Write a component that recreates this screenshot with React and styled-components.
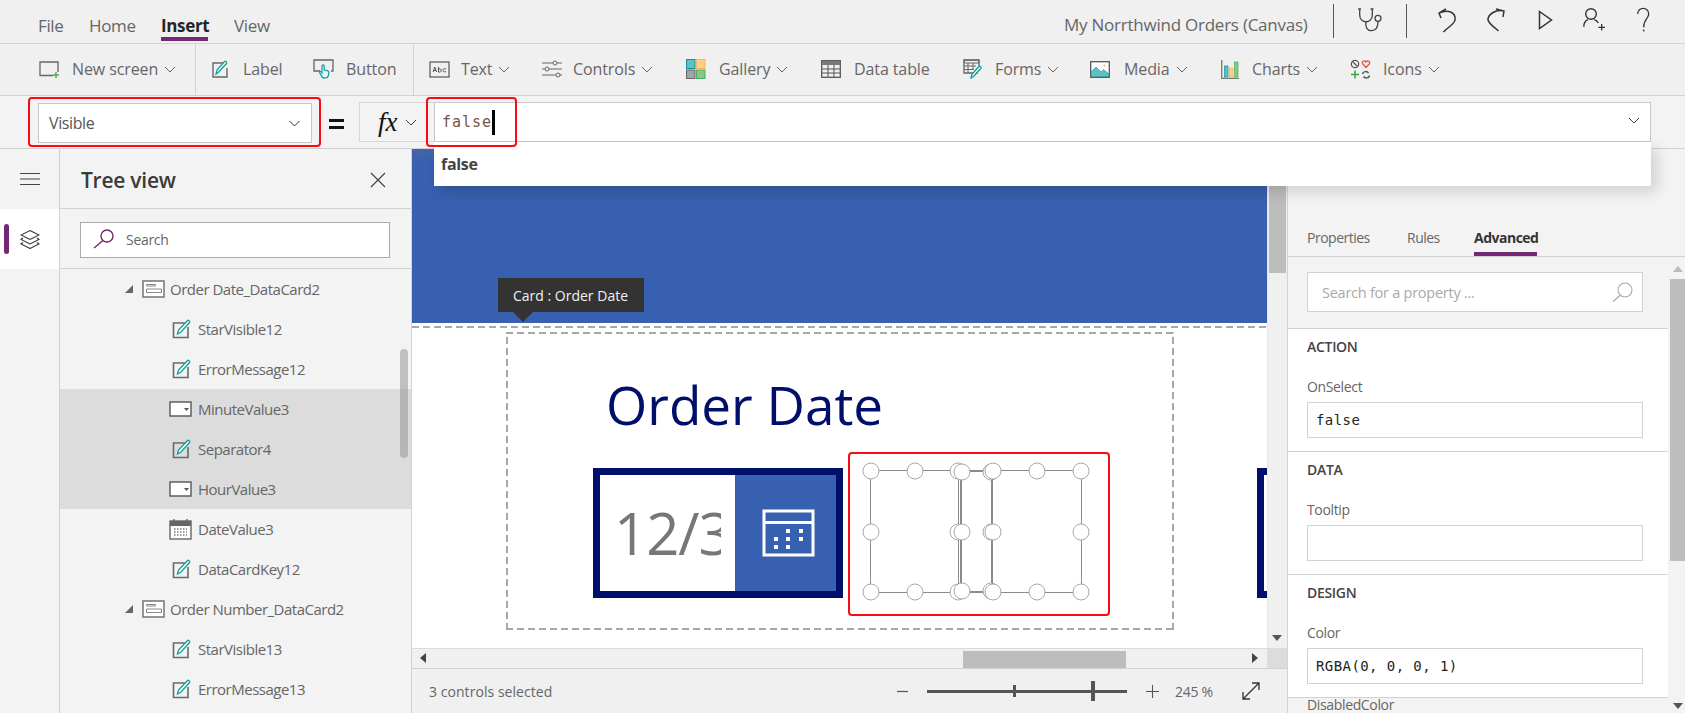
import React from "react";
import styled, { createGlobalStyle } from "styled-components";

const UI = `"Open Sans", "Noto Sans", "Liberation Sans", sans-serif`;
const MONO = `"DejaVu Sans Mono", "Liberation Mono", monospace`;

const Global = createGlobalStyle`
  html, body { margin: 0; padding: 0; background: #f3f3f3; }
  *, *::before, *::after { box-sizing: border-box; }
  body { font-family: ${UI}; }
`;

const Page = styled.div`
  position: relative; width: 1685px; height: 713px; overflow: hidden;
  display: flex; flex-direction: column; background: #f3f3f3; color: #666;
`;

/* ---------- top menu ---------- */
const TopBar = styled.header`
  height: 44px; flex: none; display: flex; align-items: flex-start; background: #f0f0f0;
  border-bottom: 1px solid #d2d2d2; padding-left: 38px;
`;
const MenuItem = styled.div`
  width: ${p => p.$w}px; flex: none; font-size: 17px; letter-spacing: -0.35px; line-height: 22px; padding-top: 15px;
  color: ${p => (p.$active ? "#252525" : "#666")}; font-weight: ${p => (p.$active ? 700 : 400)};
  position: relative;
  ${p => p.$active && `&::after{content:"";position:absolute;left:0;width:47px;top:37px;height:4px;background:#742774;}`}
`;
const TopRight = styled.div`
  margin-left: auto; display: flex; align-items: center; height: 40px; padding-right: 17px;
`;
const DocTitle = styled.div`
  font-size: 17px; letter-spacing: -0.24px; color: #666; width: 269px; padding-top: 8px; white-space: nowrap;
`;
const TopSep = styled.div`
  width: 1px; height: 34px; background: #555; flex: none; margin-top: 2px;
`;
const TopIcon = styled.div`
  width: ${p => p.$w}px; flex: none; display: flex; justify-content: center; margin-left: ${p => p.$ml || 0}px;
`;

/* ---------- ribbon ---------- */
const Ribbon = styled.div`
  height: 52px; flex: none; display: flex; align-items: center; padding-left: 39px; background: #f0f0f0;
  border-bottom: 1px solid #d2d2d2;
`;
const RibbonItem = styled.div`
  width: ${p => p.$w}px; flex: none; display: flex; align-items: center; height: 100%; padding-bottom: 1px;
  font-size: 16px; letter-spacing: -0.1px; color: #666; white-space: nowrap;
`;
const RibbonIcon = styled.span`
  width: ${p => p.$w || 33}px; flex: none; display: flex; align-items: center;
`;
const RibbonDivider = styled.div`
  width: 1px; height: 100%; background: #d2d2d2; flex: none; margin-right: ${p => p.$mr}px;
`;
const ChevronWrap = styled.span`
  display: inline-flex; margin-left: ${p => p.$ml || 6}px;
`;

/* ---------- formula bar ---------- */
const FormulaBar = styled.div`
  height: 53px; flex: none; display: flex; align-items: flex-start; padding: 6px 0 0 38px; background: #f3f3f3;
  border-bottom: 1px solid #d2d2d2;
`;
const PropertySelect = styled.div`
  width: 274px; height: 40px; margin-top: 1px; background: #fff; border: 1px solid #c8c8c8; display: flex; align-items: center;
  justify-content: space-between; padding: 0 10px; font-size: 16px; letter-spacing: -0.4px; color: #555;
`;
const Equals = styled.div`
  width: 47px; flex: none; display: flex; justify-content: center; align-items: flex-start; padding-left: 2px; padding-top: 17px;
  &::before { content: ""; display: block; width: 15px; height: 10px; border-top: 3px solid #111; border-bottom: 3px solid #111; }
`;
const FxBox = styled.div`
  width: 75px; height: 40px; flex: none; border: 1px solid #d6d6d6; border-right: none; background: #f3f3f3;
  display: flex; align-items: center; padding-left: 18px;
`;
const FxText = styled.span`
  font-family: "Liberation Serif", serif; font-style: italic; font-size: 27px; color: #111; line-height: 1; width: 27px;
`;
const FormulaInput = styled.div`
  width: 1217px; height: 40px; flex: none; background: #fff; border: 1px solid #c8c8c8; display: flex; align-items: center;
  padding-left: 7px; position: relative;
`;
const Code = styled.span`
  font-family: ${MONO}; font-size: 15px; letter-spacing: 1px; color: #795548; line-height: 1;
`;
const Caret = styled.span`
  width: 3px; height: 25px; background: #000;
`;
const FormulaChevron = styled.span`
  position: absolute; right: 10px; top: 14px; display: flex;
`;
const Suggest = styled.div`
  position: absolute; left: 434px; top: 142px; width: 1217px; height: 44px; background: #fff;
  box-shadow: 6px 6px 14px rgba(0,0,0,.14); z-index: 5; padding: 11px 0 0 7px;
  font-size: 16px; font-weight: 700; letter-spacing: -0.3px; color: #444; line-height: 22px;
`;
const RedBox = styled.div`
  position: absolute; left: ${p => p.$x}px; top: ${p => p.$y}px; width: ${p => p.$w}px; height: ${p => p.$h}px;
  border: 2px solid #fb0a14; border-radius: 4px; z-index: 6; pointer-events: none;
`;

/* ---------- body ---------- */
const Body = styled.div`
  flex: 1; display: flex; min-height: 0;
`;
const Rail = styled.nav`
  width: 60px; flex: none; border-right: 1px solid #d2d2d2; background: #f3f3f3; display: flex; flex-direction: column;
`;
const RailTop = styled.div`
  height: 60px; display: flex; justify-content: center; padding: 23px 0 0 0;
`;
const RailActive = styled.div`
  height: 60px; width: 59px; background: #fff; position: relative; display: flex; align-items: center; justify-content: center;
  &::before { content: ""; position: absolute; left: 4px; top: 15px; width: 5px; height: 30px; border-radius: 3px; background: #742774; }
`;

const TreePanel = styled.aside`
  width: 352px; flex: none; display: flex; flex-direction: column; border-right: 1px solid #d2d2d2; background: #f3f3f3; position: relative; overflow: hidden;
`;
const TreeHead = styled.div`
  height: 60px; flex: none; display: flex; align-items: center; justify-content: space-between; padding: 3px 25px 0 21px;
  border-bottom: 1px solid #d2d2d2;
`;
const TreeTitle = styled.h2`
  margin: 0; font-size: 21px; font-weight: 600; letter-spacing: -0.25px; color: #3a3a3a;
`;
const TreeSearchArea = styled.div`
  height: 60px; flex: none; padding: 13px 21px 0 20px; border-bottom: 1px solid #d2d2d2; width: 351px;
`;
const TreeSearch = styled.div`
  height: 36px; background: #fff; border: 1px solid #a9a9a9; display: flex; align-items: center; padding: 0 0 2px 12px;
  font-size: 14px; letter-spacing: -0.3px; color: #666; gap: 11px;
`;
const TreeList = styled.div`
  flex: 1; overflow: hidden; width: 351px;
`;
const TreeRow = styled.div`
  height: 40px; display: flex; align-items: center; padding-left: ${p => p.$pad}px;
  background: ${p => (p.$sel ? "#dcdcdc" : "transparent")}; font-size: 15px; letter-spacing: -0.5px; color: #666;
`;
const TreeIcon = styled.span`
  width: ${p => p.$w}px; flex: none; display: flex; align-items: center;
`;
const TreeScroll = styled.div`
  position: absolute; left: 340px; top: 200px; width: 8px; height: 109px; border-radius: 4px; background: rgba(150,150,150,.55);
`;

const CanvasCol = styled.main`
  width: 876px; flex: none; display: flex; flex-direction: column; border-right: 1px solid #d2d2d2; min-height: 0;
`;
const CanvasRow = styled.div`
  flex: none; height: 500px; display: flex;
`;
const Stage = styled.div`
  width: 855px; flex: none; position: relative; overflow: hidden; background: #fff; border-bottom: 1px solid #dadada;
`;
const BlueBand = styled.div`
  height: 174px; background: linear-gradient(#4464a8 0, #3860b0 14px);
`;
const DashedLine = styled.div`
  position: absolute; left: 0; right: 0; top: 177px; height: 2px;
  background: repeating-linear-gradient(90deg, #a8a8a8 0 7px, transparent 7px 11px);
`;
const DashedFrame = styled.div`
  position: absolute; left: 94px; top: 183px; width: 668px; height: 298px;
  background:
    repeating-linear-gradient(90deg, #a8a8a8 0 7px, transparent 7px 11px) left top / 100% 2px no-repeat,
    repeating-linear-gradient(90deg, #a8a8a8 0 7px, transparent 7px 11px) left bottom / 100% 2px no-repeat,
    repeating-linear-gradient(0deg, #a8a8a8 0 7px, transparent 7px 11px) left top / 2px 100% no-repeat,
    repeating-linear-gradient(0deg, #a8a8a8 0 7px, transparent 7px 11px) right top / 2px 100% no-repeat;
`;
const Tip = styled.div`
  position: absolute; left: 86px; top: 129px; width: 146px; height: 34px; background: #333; color: #f2f2f2;
  font-size: 14px; letter-spacing: 0; display: flex; align-items: center; padding-left: 15px; white-space: nowrap;
  &::after { content: ""; position: absolute; left: 15px; top: 34px; border: 10px solid transparent; border-top-color: #333; border-bottom: 0; }
`;
const OrderDate = styled.div`
  position: absolute; left: 194px; top: 221px; font-size: 53px; line-height: 70px; color: #00106a; white-space: nowrap;
`;
const DatePicker = styled.div`
  position: absolute; left: ${p => p.$x}px; top: 319px; width: ${p => p.$w}px; height: 130px; border: 7px solid #00106a;
  display: flex; background: #fff; overflow: hidden;
`;
const DateField = styled.div`
  width: 135px; flex: none; font-size: 58px; line-height: 116px; color: #777; padding-left: 14px; overflow: hidden; white-space: nowrap; letter-spacing: -1px;
`;
const DateClip = styled.div`
  width: 107px; overflow: hidden;
`;
const DateBtn = styled.div`
  flex: 1; background: #3860b0; display: flex; align-items: center; justify-content: center; padding-left: 6px;
`;
const Sel = styled.div`
  position: absolute; left: ${p => p.$x}px; top: 321px; width: ${p => p.$w}px; height: 123px; border: ${p => p.$b || 1.5}px solid #8b8b8b;
`;
const Handle = styled.span`
  position: absolute; left: ${p => p.$l}%; top: ${p => p.$t}%; width: 17px; height: 17px; border-radius: 50%;
  background: #fff; border: 1px solid #a9a9a9; transform: translate(-50%, -50%);
`;
const VBar = styled.div`
  width: 20px; flex: none; background: #f0f0f0; position: relative; border-left: 1px solid #e6e6e6; border-bottom: 1px solid #dadada;
`;
const VThumb = styled.div`
  width: 17px; height: 124px; background: #bdbdbd; margin-left: 1px;
`;
const Arrow = styled.span`
  position: absolute; left: ${p => p.$x}px; top: ${p => p.$y}px; width: 0; height: 0;
  ${p => p.$d === "down" && "border: 5px solid transparent; border-top: 6px solid #555; border-bottom: 0;"}
  ${p => p.$d === "up" && "border: 5px solid transparent; border-bottom: 6px solid #bbb; border-top: 0;"}
  ${p => p.$d === "left" && "border: 5px solid transparent; border-right: 6px solid #444; border-left: 0;"}
  ${p => p.$d === "right" && "border: 5px solid transparent; border-left: 6px solid #444; border-right: 0;"}
`;
const HBar = styled.div`
  height: 20px; flex: none; display: flex; border-bottom: 1px solid #d2d2d2; background: #f0f0f0;
`;
const HTrack = styled.div`
  width: 855px; flex: none; position: relative; padding-left: 551px;
`;
const HThumb = styled.div`
  width: 163px; height: 17px; margin-top: 2px; background: #bdbdbd;
`;
const Corner = styled.div`
  flex: 1; background: #dcdcdc;
`;
const StatusBar = styled.div`
  flex: 1; background: #f0f0f0; display: flex; align-items: center; padding: 0 0 0 17px; font-size: 14px; letter-spacing: 0.05px; color: #666;
`;
const StatusText = styled.span`
  width: 468px; flex: none;
`;
const Slider = styled.div`
  width: 200px; height: 3px; background: #555; position: relative; flex: none; margin: 0 19px 0 18px;
  &::before { content: ""; position: absolute; left: 86px; top: -5px; width: 3px; height: 12px; background: #555; }
  &::after { content: ""; position: absolute; left: 164px; top: -9px; width: 4px; height: 20px; background: #555; }
`;
const Zoom = styled.span`
  width: 83px; padding-left: 16px; flex: none; white-space: nowrap; letter-spacing: -0.3px;
`;

/* ---------- right panel ---------- */
const RightPanel = styled.aside`
  flex: 1; background: #f3f3f3; display: flex; flex-direction: column; position: relative; min-width: 0;
`;
const Tabs = styled.div`
  height: 108px; flex: none; display: flex; align-items: flex-end; padding-left: 19px; border-bottom: 1px solid #d2d2d2;
`;
const Tab = styled.div`
  width: ${p => p.$w}px; flex: none; height: 28px; font-size: 14px; letter-spacing: -0.5px; line-height: 20px;
  color: ${p => (p.$active ? "#333" : "#666")}; font-weight: ${p => (p.$active ? 700 : 400)}; position: relative; white-space: nowrap;
  ${p => p.$active && `&::after{content:"";position:absolute;left:0;width:63px;bottom:0;height:4px;background:#742774;}`}
`;
const PropArea = styled.div`
  flex: 1; display: flex; min-height: 0;
`;
const PropCol = styled.div`
  width: 380px; flex: none; display: flex; flex-direction: column;
`;
const PropSearchWrap = styled.div`
  height: 72px; flex: none; padding: 15px 0 0 19px; border-bottom: 1px solid #d2d2d2;
`;
const PropSearch = styled.div`
  width: 336px; height: 40px; background: #fff; border: 1px solid #d2d2d2; display: flex; align-items: center; justify-content: space-between;
  padding: 0 9px 0 14px; font-size: 14.5px; letter-spacing: -0.25px; color: #a8a8a8;
`;
const Section = styled.section`
  height: 123px; flex: none; background: #fff; border-bottom: 1px solid #d2d2d2; padding: 8px 0 0 19px;
`;
const SectionTitle = styled.h3`
  margin: 0; font-size: 14px; font-weight: 600; letter-spacing: -0.3px; color: #444; line-height: 20px;
`;
const FieldLabel = styled.div`
  font-size: 14px; letter-spacing: -0.35px; color: #666; line-height: 20px; margin-top: ${p => p.$mt ?? 20}px; height: 25px;
`;
const FieldInput = styled.div`
  width: 336px; height: 36px; border: 1px solid #d2d2d2; background: #fff; font-family: ${MONO}; font-size: 14px; letter-spacing: 0.42px; color: #222;
  display: flex; align-items: center; padding-left: 8px; white-space: pre;
`;
const PropScroll = styled.div`
  flex: 1; position: relative; background: #f3f3f3; padding-top: 22px;
`;
const PropThumb = styled.div`
  width: 15px; height: 282px; margin-left: 2px; background: #bdbdbd;
`;

/* ---------- icons ---------- */
const Svg = ({ w, h, children, vb, ...r }) => (
  <svg width={w} height={h} viewBox={vb || `0 0 ${w} ${h}`} fill="none" {...r}>{children}</svg>
);
const Chev = ({ c = "#666", s = 12 }) => (
  <Svg w={s} h={7} vb="0 0 12 7"><path d="M1 1l5 5 5-5" stroke={c} strokeWidth="1" /></Svg>
);
const PencilBox = () => (
  <Svg w={20} h={20}>
    <path d="M13 4H1.5v14.500H16V8" stroke="#6a6a6a" strokeWidth="1.600" />
    <path d="M5.500 15l1-4L15.500 1.500c1-.8 2.800.6 2 2L9 13z" stroke="#0e9c9c" strokeWidth="1.300" fill="#fff" />
  </Svg>
);
const CardIcon = () => (
  <Svg w={23} h={18}>
    <rect x="1" y="1" width="21" height="16" stroke="#6a6a6a" strokeWidth="1.400" fill="#fff" />
    <path d="M4.500 4.500h9v1.500h-9zM4.500 9h15v3.500h-15z" stroke="#8a8a8a" />
  </Svg>
);
const DropIcon = () => (
  <Svg w={23} h={16}>
    <rect x="1" y="1" width="21" height="14" stroke="#555" strokeWidth="1.400" fill="#fff" />
    <path d="M15 7h5l-2.500 3z" fill="#555" />
  </Svg>
);
const CalTreeIcon = () => (
  <Svg w={23} h={22}>
    <rect x="1" y="3" width="21" height="18" stroke="#666" strokeWidth="1.400" fill="#fff" />
    <rect x="1" y="3" width="21" height="5" fill="#666" />
    <path d="M5 1v3M18 1v3" stroke="#666" strokeWidth="1.400" />
    <path d="M5 11h13M5 14h13M5 17h13" stroke="#777" strokeWidth="1.300" strokeDasharray="1.500 1.500" />
  </Svg>
);
const Tri = () => (
  <Svg w={8} h={8}><path d="M8 0v8H0z" fill="#666" /></Svg>
);

const NewScreenIcon = () => (
  <Svg w={21} h={19}>
    <path d="M14 15.500H1V2h18v10" stroke="#666" strokeWidth="1.300" />
    <path d="M17 12v6M14 15h6" stroke="#4caf50" strokeWidth="1.500" />
  </Svg>
);
const LabelIcon = () => (
  <Svg w={18} h={18}>
    <path d="M11 3H1v14h14V8" stroke="#666" strokeWidth="1.400" />
    <path d="M4 14l1-4 7.500-8.500c1-.9 3 .7 2 2L6.800 12z" stroke="#0e9c9c" strokeWidth="1.200" fill="#f0f0f0" />
  </Svg>
);
const ButtonIcon = () => (
  <Svg w={21} h={20}>
    <path d="M7 12H1V1h19v11h-2" stroke="#666" strokeWidth="1.300" />
    <path d="M9 18l-2.500-4.500c-.5-1 1-1.500 1.500-.7l1 1.200V7c0-1.500 2.200-1.500 2.200 0v4l3 .6c1.500.3 1.800 1.200 1.600 2.400l-.5 3c-.6 2.500-5 2.500-6.300 1z" stroke="#0e9c9c" strokeWidth="1.200" fill="#f0f0f0" />
  </Svg>
);
const TextIcon = () => (
  <Svg w={21} h={17}>
    <rect x="1" y="1" width="19" height="15" stroke="#555" strokeWidth="1.200" />
    <path d="M4 11l1.800-5 1.800 5M4.700 9.500h2.200M9.500 6v5c1.800.5 2.700-.3 2.700-1.600s-1-2-2.700-1.300M17 8c-2-1-3 .2-3 1.300s1 2.200 3 1.300" stroke="#444" strokeWidth=".9" />
  </Svg>
);
const ControlsIcon = () => (
  <Svg w={21} h={18}>
    <path d="M1 3h11M16 3h5M1 9h3M8 9h13M1 15h14M19 15h2" stroke="#666" strokeWidth="1.200" />
    <circle cx="14" cy="3" r="2" stroke="#666" /><circle cx="6" cy="9" r="2" stroke="#666" /><circle cx="17" cy="15" r="2" stroke="#666" />
  </Svg>
);
const GalleryIcon = () => (
  <Svg w={20} h={20}>
    <rect x=".5" y=".5" width="8.500" height="9" fill="#5cc2c2" stroke="#1d8f96" />
    <rect x="10.500" y=".5" width="8.500" height="9" fill="#fdcf86" stroke="#f0b860" />
    <rect x=".5" y="11" width="8.500" height="8.500" fill="#a3a3a3" stroke="#666" />
    <rect x="10.500" y="11" width="8.500" height="8.500" fill="#8bc58b" stroke="#4caf60" />
  </Svg>
);
const TableIcon = () => (
  <Svg w={20} h={18}>
    <rect x=".7" y=".7" width="18.600" height="16.600" stroke="#555" strokeWidth="1.300" fill="#f0f0f0" />
    <rect x="1" y="1" width="18" height="4" fill="#7a7a7a" />
    <path d="M1 9h18M1 13h18M7 5v12M13 5v12" stroke="#555" />
  </Svg>
);
const FormsIcon = () => (
  <Svg w={20} h={20}>
    <path d="M15 14H1V1h15v8" stroke="#666" strokeWidth="1.300" />
    <path d="M1 1h15v3H1zM1 7h12M1 10.500h10M5 4v10M10 4v7" stroke="#666" />
    <path d="M8 19l.8-3.500 7-8c1-.9 3 .6 2 2l-7.200 8z" stroke="#0e9c9c" strokeWidth="1.200" fill="#f0f0f0" />
  </Svg>
);
const MediaIcon = () => (
  <Svg w={20} h={17}>
    <rect x=".7" y=".7" width="18.600" height="15.600" stroke="#555" strokeWidth="1.300" fill="#fff" />
    <path d="M1 15.500V11l5-5 5 5 2.500-2.500L19 13v2.500z" fill="#5cc2c2" stroke="#1d8f96" strokeWidth=".6" />
    <circle cx="14.500" cy="4.500" r="1" fill="#f0b860" />
  </Svg>
);
const ChartsIcon = () => (
  <Svg w={18} h={19}>
    <path d="M.7 0v18.300H18" stroke="#777" strokeWidth="1.300" />
    <rect x="3.500" y="6" width="3.500" height="11" fill="#5cc2c2" stroke="#1d8f96" strokeWidth=".7" />
    <rect x="8.500" y="8" width="3.500" height="9" fill="#fdcf86" stroke="#f0b860" strokeWidth=".7" />
    <rect x="13.500" y="2" width="3.500" height="15" fill="#8bc58b" stroke="#4caf60" strokeWidth=".7" />
  </Svg>
);
const IconsIcon = () => (
  <Svg w={21} h={21}>
    <circle cx="5" cy="5" r="3.700" stroke="#555" strokeWidth="1.200" />
    <path d="M2.500 2.500l5 5" stroke="#555" strokeWidth="1.200" />
    <path d="M16 8.500l-3.500-4c-1.200-2 1.800-3.500 3.500-1.500 1.700-2 4.700-.5 3.500 1.500z" stroke="#e8563a" strokeWidth="1.300" />
    <path d="M5 11.500v8M1 15.500h8" stroke="#3da33d" strokeWidth="1.500" />
    <path d="M12.500 15c.5-2.800 4.500-3.200 6-1M19.500 16.500c-.5 2.800-4.500 3.200-6 1" stroke="#555" strokeWidth="1.500" />
  </Svg>
);

/* ---------- data ---------- */
const ribbon1 = { icon: <NewScreenIcon />, label: "New screen", chev: true, w: 156, iw: 33 };
const ribbonA = [
  { icon: <LabelIcon />, label: "Label", w: 101, iw: 31 },
  { icon: <ButtonIcon />, label: "Button", w: 100, iw: 33 },
];
const ribbonB = [
  { icon: <TextIcon />, label: "Text", chev: true, w: 112, iw: 32 },
  { icon: <ControlsIcon />, label: "Controls", chev: true, w: 145, iw: 32 },
  { icon: <GalleryIcon />, label: "Gallery", chev: true, w: 135, iw: 33 },
  { icon: <TableIcon />, label: "Data table", w: 142, iw: 33 },
  { icon: <FormsIcon />, label: "Forms", chev: true, w: 127, iw: 32 },
  { icon: <MediaIcon />, label: "Media", chev: true, w: 131, iw: 34 },
  { icon: <ChartsIcon />, label: "Charts", chev: true, w: 129, iw: 31 },
  { icon: <IconsIcon />, label: "Icons", chev: true, w: 100, iw: 33 },
];

const tree = [
  { t: "Order Date_DataCard2", k: "card" },
  { t: "StarVisible12", k: "pen" },
  { t: "ErrorMessage12", k: "pen" },
  { t: "MinuteValue3", k: "drop", sel: true },
  { t: "Separator4", k: "pen", sel: true },
  { t: "HourValue3", k: "drop", sel: true },
  { t: "DateValue3", k: "cal" },
  { t: "DataCardKey12", k: "pen" },
  { t: "Order Number_DataCard2", k: "card" },
  { t: "StarVisible13", k: "pen" },
  { t: "ErrorMessage13", k: "pen" },
];

const RItem = ({ it }) => (
  <RibbonItem $w={it.w}>
    <RibbonIcon $w={it.iw}>{it.icon}</RibbonIcon>
    {it.label}
    {it.chev && <ChevronWrap $ml={6}><Chev /></ChevronWrap>}
  </RibbonItem>
);

const TreeEntry = ({ it }) => {
  if (it.k === "card")
    return (
      <TreeRow $pad={65}>
        <TreeIcon $w={17}><Tri /></TreeIcon>
        <TreeIcon $w={28}><CardIcon /></TreeIcon>
        {it.t}
      </TreeRow>
    );
  return (
    <TreeRow $sel={it.sel} $pad={it.k === "pen" ? 112 : 109}>
      <TreeIcon $w={it.k === "pen" ? 26 : 29}>
        {it.k === "pen" ? <PencilBox /> : it.k === "drop" ? <DropIcon /> : <CalTreeIcon />}
      </TreeIcon>
      {it.t}
    </TreeRow>
  );
};

const handlePos = [[0,0],[50,0],[100,0],[0,50],[100,50],[0,100],[50,100],[100,100]];
const SelBox = ({ x, w, b, noMid }) => (
  <Sel $x={x} $w={w} $b={b}>
    {handlePos.filter(([l]) => !(noMid && l === 50)).map(([l, t]) => <Handle key={`${l}-${t}`} $l={l} $t={t} />)}
  </Sel>
);

const Field = ({ label, value }) => (
  <>
    <FieldLabel>{label}</FieldLabel>
    <FieldInput>{value}</FieldInput>
  </>
);

export default function App() {
  return (
    <Page>
      <Global />
      <TopBar>
        <MenuItem $w={51}>File</MenuItem>
        <MenuItem $w={72}>Home</MenuItem>
        <MenuItem $w={73} $active>Insert</MenuItem>
        <MenuItem $w={50}>View</MenuItem>
        <TopRight>
          <DocTitle>My Norrthwind Orders (Canvas)</DocTitle>
          <TopSep />
          <TopIcon $w={72}>
            <Svg w={26} h={26}>
              <path d="M1.200 2h2.800M13.500 2h3M2.700 2v6c0 9 12.600 9 12.600 0V2" stroke="#444" strokeWidth="1.300" />
              <path d="M9 15c-1.200 5 1.500 9 5.500 8.700 4-.3 6.500-3 6.500-9" stroke="#444" strokeWidth="1.300" />
              <circle cx="21" cy="11.300" r="3" stroke="#444" strokeWidth="1.300" />
            </Svg>
          </TopIcon>
          <TopSep />
          <TopIcon $w={49} $ml={16}>
            <Svg w={20} h={26}>
              <path d="M8 2L1 6l2 5M1 6c9-4 17-1 16 7-.5 4-7 7-11.500 12" stroke="#333" strokeWidth="1.500" />
            </Svg>
          </TopIcon>
          <TopIcon $w={49}>
            <Svg w={20} h={26}>
              <path d="M9 2l8 2-1 6M17 4C9 2 1 7 1 13c1 4 6 7 10.500 11" stroke="#333" strokeWidth="1.500" />
            </Svg>
          </TopIcon>
          <TopIcon $w={49}>
            <Svg w={16} h={22}><path d="M1.500 2.500l12 8.500-12 8.500z" stroke="#333" strokeWidth="1.500" /></Svg>
          </TopIcon>
          <TopIcon $w={49}>
            <Svg w={23} h={26}>
              <circle cx="8" cy="7" r="5.300" stroke="#333" strokeWidth="1.400" />
              <path d="M.8 19.700c0-3.300 1.500-5.700 4-7M11.300 12.700c1.800.7 3.200 1.800 4 3.300" stroke="#333" strokeWidth="1.400" />
              <path d="M18.700 17v6.600M15.400 20.300H22" stroke="#333" strokeWidth="1.300" />
            </Svg>
          </TopIcon>
          <TopIcon $w={49}>
            <Svg w={15} h={26}>
              <path d="M1.700 7c0-7.500 11-7.500 11 0 0 5-5 4.500-5 13.300" stroke="#333" strokeWidth="1.300" />
              <circle cx="7.700" cy="23.500" r=".9" fill="#333" />
            </Svg>
          </TopIcon>
        </TopRight>
      </TopBar>

      <Ribbon>
        <RItem it={ribbon1} />
        <RibbonDivider $mr={16} />
        {ribbonA.map(it => <RItem key={it.label} it={it} />)}
        <RibbonDivider $mr={15} />
        {ribbonB.map(it => <RItem key={it.label} it={it} />)}
      </Ribbon>

      <FormulaBar>
        <PropertySelect>Visible<Chev c="#333" s={13} /></PropertySelect>
        <Equals />
        <FxBox>
          <FxText>fx</FxText>
          <Chev c="#444" />
        </FxBox>
        <FormulaInput>
          <Code>false</Code><Caret />
          <FormulaChevron><Chev c="#444" /></FormulaChevron>
        </FormulaInput>
      </FormulaBar>
      <Suggest>false</Suggest>
      <RedBox $x={28} $y={97} $w={293} $h={50} />
      <RedBox $x={426} $y={97} $w={91} $h={50} />
      <RedBox $x={848} $y={452} $w={262} $h={164} />

      <Body>
        <Rail>
          <RailTop>
            <Svg w={20} h={14}><path d="M0 1.500h20M0 7h20M0 12.500h20" stroke="#444" strokeWidth="1.100" /></Svg>
          </RailTop>
          <RailActive>
            <Svg w={20} h={20}>
              <path d="M10 1.500l9 4.500-9 4.500-9-4.500zM3 9l-2 1.500L10 15l9-4.500L17 9M3 13.500L1 15l9 4.500 9-4.500-2-1.500" stroke="#333" strokeWidth="1.100" fill="#fff" />
            </Svg>
          </RailActive>
        </Rail>

        <TreePanel>
          <TreeHead>
            <TreeTitle>Tree view</TreeTitle>
            <Svg w={16} h={16}><path d="M1 1l14 14M15 1L1 15" stroke="#444" strokeWidth="1.200" /></Svg>
          </TreeHead>
          <TreeSearchArea>
            <TreeSearch>
              <Svg w={22} h={20}>
                <circle cx="14" cy="7" r="6" stroke="#742774" strokeWidth="1.400" />
                <path d="M10 11.500L1 19" stroke="#742774" strokeWidth="1.400" />
              </Svg>
              Search
            </TreeSearch>
          </TreeSearchArea>
          <TreeList>
            {tree.map(it => <TreeEntry key={it.t} it={it} />)}
          </TreeList>
          <TreeScroll />
        </TreePanel>

        <CanvasCol>
          <CanvasRow>
            <Stage>
              <BlueBand />
              <DashedLine />
              <DashedFrame />
              <Tip>Card : Order Date</Tip>
              <OrderDate>Order Date</OrderDate>
              <DatePicker $x={181} $w={250}>
                <DateField><DateClip>12/31/2001</DateClip></DateField>
                <DateBtn>
                  <Svg w={53} h={48}>
                    <rect x="2" y="2" width="49" height="44" stroke="#fff" strokeWidth="3" />
                    <path d="M2 13.500h49" stroke="#fff" strokeWidth="3" />
                    <path d="M24 20h4v4h-4zM37 20h4v4h-4zM12 28h4v4h-4zM24 28h4v4h-4zM37 28h4v4h-4zM12 36h4v4h-4zM24 36h4v4h-4z" fill="#fff" />
                  </Svg>
                </DateBtn>
              </DatePicker>
              <SelBox x={458} w={89} />
              <SelBox x={548} w={33} b={2} noMid />
              <SelBox x={580} w={90} />
              <DatePicker $x={845} $w={60} />
            </Stage>
            <VBar>
              <VThumb />
              <Arrow $d="down" $x={4} $y={486} />
            </VBar>
          </CanvasRow>
          <HBar>
            <HTrack>
              <Arrow $d="left" $x={8} $y={4} />
              <HThumb />
              <Arrow $d="right" $x={840} $y={4} />
            </HTrack>
            <Corner />
          </HBar>
          <StatusBar>
            <StatusText>3 controls selected</StatusText>
            <Svg w={12} h={3}><path d="M0 1.500h11" stroke="#555" strokeWidth="1.200" /></Svg>
            <Slider />
            <Svg w={13} h={13}><path d="M6.500 0v13M0 6.500h13" stroke="#555" strokeWidth="1.100" /></Svg>
            <Zoom>245 %</Zoom>
            <Svg w={18} h={18}><path d="M1 17L17 1M10 1h7v7M1 10v7h7" stroke="#333" strokeWidth="1.300" /></Svg>
          </StatusBar>
        </CanvasCol>

        <RightPanel>
          <Tabs>
            <Tab $w={100}>Properties</Tab>
            <Tab $w={67}>Rules</Tab>
            <Tab $w={64} $active>Advanced</Tab>
          </Tabs>
          <PropArea>
            <PropCol>
              <PropSearchWrap>
                <PropSearch>
                  Search for a property ...
                  <Svg w={21} h={20}>
                    <circle cx="13" cy="8" r="7" stroke="#a8a8a8" strokeWidth="1.100" />
                    <path d="M8.500 13L1 19.500" stroke="#a8a8a8" strokeWidth="1.100" />
                  </Svg>
                </PropSearch>
              </PropSearchWrap>
              <Section>
                <SectionTitle>ACTION</SectionTitle>
                <Field label="OnSelect" value="false" />
              </Section>
              <Section>
                <SectionTitle>DATA</SectionTitle>
                <Field label="Tooltip" value="" />
              </Section>
              <Section>
                <SectionTitle>DESIGN</SectionTitle>
                <Field label="Color" value="RGBA(0, 0, 0, 1)" />
                <FieldLabel $mt={11}>DisabledColor</FieldLabel>
              </Section>
            </PropCol>
            <PropScroll>
              <Arrow $d="up" $x={5} $y={9} />
              <PropThumb />
              <Arrow $d="down" $x={5} $y={446} />
            </PropScroll>
          </PropArea>
        </RightPanel>
      </Body>
    </Page>
  );
}
